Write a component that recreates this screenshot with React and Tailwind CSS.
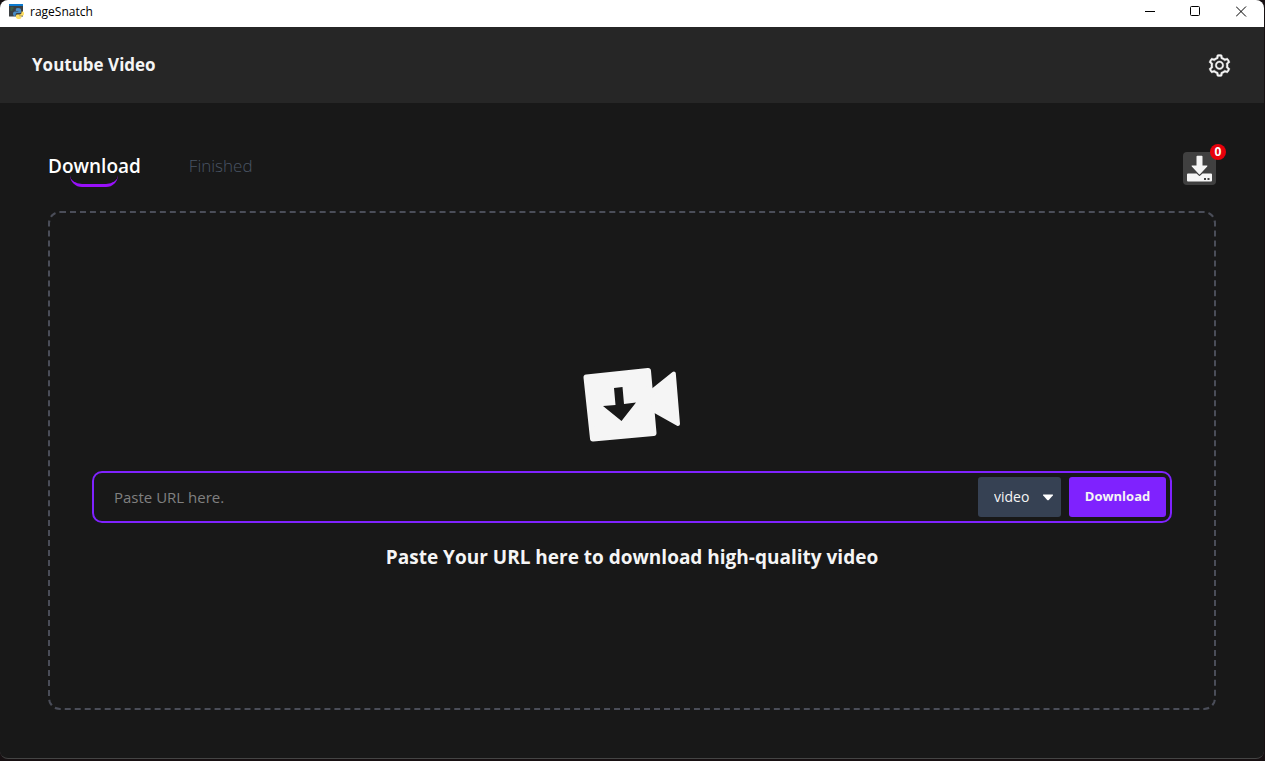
import { AiOutlineSetting } from "react-icons/ai";

function PythonConsoleIcon() {
  return (
    <svg className="h-4 w-4" viewBox="0 0 16 16" aria-hidden="true">
      <rect x="0" y="0.5" width="14" height="12" fill="#3b3f42" />
      <rect x="0" y="0" width="14" height="2" fill="#0c7bd0" />
      <path d="M1.500 4h3M1.500 6h2" stroke="#3f7a48" strokeWidth="1" />
      <path d="M9 4c-2.200 0-2.200.9-2.200 1.900V7h2.500v.4H5.800C4.600 7.400 4 8.400 4 9.700s.6 2.300 1.600 2.300h1v-1.300c0-1 .8-1.700 1.700-1.700h2.500c.8 0 1.300-.6 1.300-1.300V5.900C12.100 4.900 11 4 9 4z" fill="#4b8bc4" />
      <path d="M10.200 15c2.200 0 2.200-.9 2.200-1.900V12.200H9.900v-.4h3.500c1.200 0 1.600-1 1.600-2.200s-.6-2.100-1.600-2.100h-.9v1.300c0 1-.8 1.700-1.700 1.700H8.300C7.500 10.500 7 11.100 7 11.800v1.400c0 1 1.200 1.800 3.200 1.800z" fill="#ffdf62" />
    </svg>
  );
}

function TitleBar() {
  return (
    <div className="flex h-[27px] items-start justify-between bg-white pl-[9px] text-black">
      <div className="flex h-6 items-center gap-[5px]">
        <PythonConsoleIcon />
        <span className="text-[12px] leading-4">rageSnatch</span>
      </div>
      <div className="flex h-[23px]">
        <button type="button" aria-label="Minimize" className="flex w-[45px] items-center justify-center">
          <svg className="h-[11px] w-[11px]" viewBox="0 0 11 11" fill="none" stroke="currentColor">
            <path d="M1 5.500h10" />
          </svg>
        </button>
        <button type="button" aria-label="Maximize" className="flex w-[46px] items-center justify-center">
          <svg className="h-[11px] w-[11px]" viewBox="0 0 11 11" fill="none" stroke="currentColor">
            <rect x="0.5" y="0.5" width="9" height="9" rx="1" />
          </svg>
        </button>
        <button type="button" aria-label="Close" className="flex w-[46px] items-center justify-center">
          <svg className="h-[11px] w-[11px]" viewBox="0 0 11 11" fill="none" stroke="currentColor">
            <path d="M0 0.500l10 10M10 0.500l-10 10" />
          </svg>
        </button>
      </div>
    </div>
  );
}

function TrayIcon() {
  return (
    <svg className="h-[27px] w-[27px]" viewBox="0 0 27 27" fill="#f5f5f5" aria-hidden="true">
      <path d="M10.500 1.500q0-.8.800-.8h4.400q.8 0 .8.800v9h4.300q1.200 0 .4 1L14 19.200q-.5.500-1 0L5.800 11.500q-.8-1 .4-1h4.300z" />
      <path fillRule="evenodd" d="M2 18.500h8.500l2.500 2.200q.5.400 1 0l2.500-2.200H25q1 0 1 1v6q0 1-1 1H2q-1 0-1-1v-6q0-1 1-1zM18 23v2h2v-2zM21.500 23v2h2v-2z" />
    </svg>
  );
}

function VideoDownloadIcon() {
  return (
    <svg className="h-24 w-24 overflow-visible" viewBox="0 0 96 96" aria-hidden="true">
      <g fill="#f5f5f5" stroke="#f5f5f5" strokeLinejoin="round">
        <path d="M2.500 22.500L64 16L69.500 78L9 83.500z" strokeWidth="6" />
        <path d="M68 36L89.800 18.500L94 69L70 55.500z" strokeWidth="4" />
      </g>
      <path d="M30 33L38.500 32L40 49L52 47.500L37.500 66L19 51L31.500 50z" fill="#181818" />
    </svg>
  );
}

export default function App() {
  return (
    <div className="flex min-h-screen flex-col bg-[#171012] pr-px pb-[2px] font-['Open_Sans','Noto_Sans',sans-serif]">
      <div className="flex grow flex-col overflow-hidden rounded-lg border-b border-[#444444] bg-[#181818] text-[#f5f5f5]">
        <TitleBar />
        <header className="flex h-[76px] items-center justify-between bg-[#262626] px-8">
          <h1 className="text-[17px] leading-7 font-bold">Youtube Video</h1>
          <button type="button" aria-label="Settings">
            <AiOutlineSetting className="h-[25px] w-[25px] stroke-[16px]" />
          </button>
        </header>
        <main className="flex grow flex-col px-12 pt-[49px] pb-12">
          <div className="flex h-[33px] items-start justify-between">
            <nav className="flex items-center gap-12">
              <button type="button" className="relative text-[19px] leading-7 font-semibold text-white">
                Download
                <span className="absolute top-[23px] left-1/2 h-3 w-12 -translate-x-1/2 rounded-b-xl border-b-3 border-[#9810fa]" />
              </button>
              <button type="button" className="text-[17px] leading-7 font-light text-[#4a5565]">
                Finished
              </button>
            </nav>
            <button type="button" aria-label="Downloads" className="relative flex h-[33px] w-[33px] items-center justify-center rounded-sm bg-[#404040]">
              <TrayIcon />
              <span className="absolute -top-2 -right-[10px] flex h-4 w-4 items-center justify-center rounded-full bg-[#e7000b] text-[12px] leading-4 font-bold text-white">
                0
              </span>
            </button>
          </div>
          <section className="mt-[26px] flex grow flex-col items-center justify-center rounded-xl border-2 border-dashed border-[#4a4d58] px-[42px] pt-1">
            <VideoDownloadIcon />
            <form className="mt-5 flex w-full items-center gap-2 rounded-[10px] border-2 border-[#7f22fe] p-1" onSubmit={(e) => e.preventDefault()}>
              <input
                type="text"
                aria-label="Video URL"
                placeholder="Paste URL here."
                className="h-10 min-w-0 grow bg-transparent px-4 text-[15px] outline-none placeholder:text-[#808080]"
              />
              <div className="relative">
                <select
                  aria-label="Format"
                  defaultValue="video"
                  className="h-10 w-[83px] appearance-none rounded-[3px] bg-[#364153] pl-4 text-[14px] text-[#f5f5f5]"
                >
                  <option value="video">video</option>
                  <option value="audio">audio</option>
                </select>
                <svg className="pointer-events-none absolute top-[17px] right-[7px] h-[7px] w-3" viewBox="0 0 12 7" fill="#ffffff" aria-hidden="true">
                  <path d="M1.500 0.500h9q1 .2.300 1L6.800 6q-.8.700-1.600 0L1.200 1.500q-.7-.8.300-1z" />
                </svg>
              </div>
              <button type="submit" className="h-10 w-[97px] rounded-[3px] bg-[#7f22fe] text-[13px] font-bold text-[#f5f5f5]">
                Download
              </button>
            </form>
            <p className="mt-5 text-[19px] leading-7 font-bold">Paste Your URL here to download high-quality video</p>
          </section>
        </main>
      </div>
    </div>
  );
}
